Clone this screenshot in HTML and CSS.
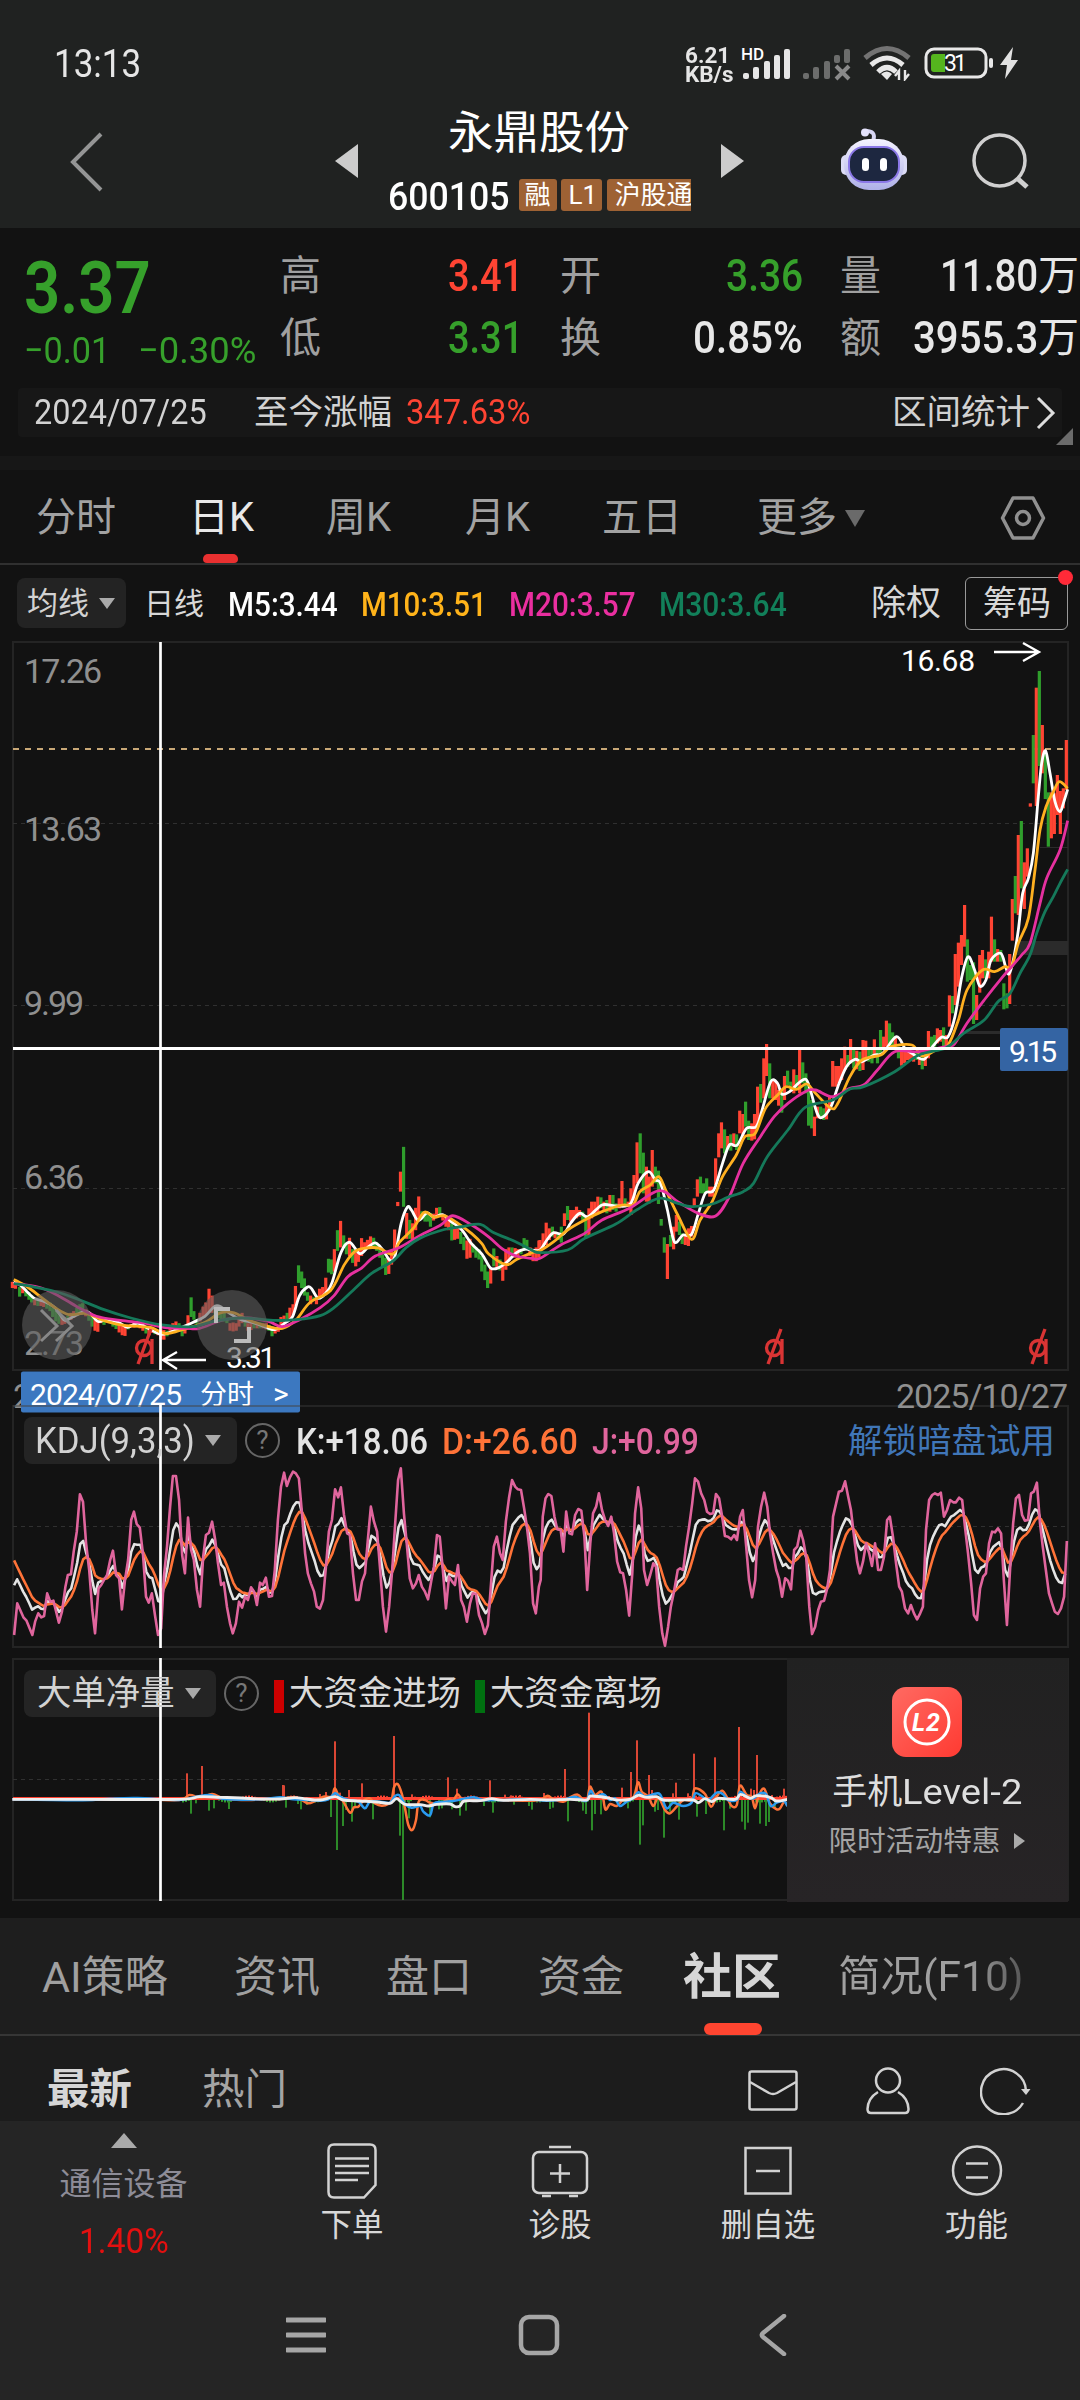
FILE: index.html
```html
<!DOCTYPE html>
<html lang="zh-CN">
<head>
<meta charset="utf-8">
<title>永鼎股份 600105</title>
<link rel="stylesheet" href="styles.css">
</head>
<body>
<header class="top">
  <div class="status">
    <span class="clock fit" data-w="87">13:13</span>
    <div class="speed"><span class="fit" data-w="45">6.21</span><span class="fit" data-w="49">KB/s</span></div>
    <svg class="signals" width="114" height="36" viewBox="0 0 114 36">
      <text x="1" y="15" font-size="17" font-weight="500" textLength="23">HD</text>
      <g fill="#e6e6e6"><rect x="3" y="28" width="6" height="6" rx="2"/><rect x="13" y="22" width="6" height="12" rx="2"/><rect x="24" y="16" width="6" height="18" rx="2"/><rect x="34" y="10" width="6" height="24" rx="2"/><rect x="44" y="4" width="6" height="30" rx="2"/></g>
      <g fill="#6c6d6c"><rect x="63" y="28" width="6" height="6" rx="2"/><rect x="73" y="22" width="6" height="12" rx="2"/><rect x="84" y="16" width="6" height="18" rx="2"/><rect x="94" y="10" width="6" height="8" rx="2"/><rect x="104" y="4" width="6" height="14" rx="2"/></g>
      <path d="M96 21l13 13M109 21l-13 13" stroke="#8a8a8a" stroke-width="4"/>
    </svg>
    <svg class="wifi" width="48" height="36" viewBox="0 0 48 36" fill="none" stroke-width="5">
      <path d="M2 13Q24-6 46 13" stroke="#737373"/><path d="M8 20Q24 6 40 20" stroke="#e8e8e8"/><path d="M15 27Q24 18 33 27" stroke="#e8e8e8"/>
      <path d="M18 29Q24 24 29 29L24 35Z" fill="#e8e8e8"/><path d="M36 35V26l-4 5M42 25v9l4-5" stroke="#e8e8e8" stroke-width="2.4"/>
    </svg>
    <svg class="battery" width="96" height="34" viewBox="0 0 96 34">
      <rect x="2" y="3" width="60" height="28" rx="8" fill="none" stroke="#e8e8e8" stroke-width="3"/>
      <path d="M10 8h11v18h-11q-3 0-3-3v-12q0-3 3-3" fill="#55b51e"/><rect x="65" y="12" width="4" height="10" rx="2" fill="#e8e8e8"/>
      <text x="20" y="25" font-size="23" textLength="23">31</text>
      <path d="M89 1L76 19h7l-2 14 13-19h-7z" fill="#e2e2e2"/>
    </svg>
  </div>
  <div class="titlebar">
    <svg class="back" width="36" height="62" viewBox="0 0 36 62"><path d="M32 3L4 31L32 59" fill="none" stroke="#949595" stroke-width="4"/></svg>
    <svg class="prev" width="24" height="36"><path d="M23 1V35L0 18Z" fill="#ccc"/></svg>
    <div class="name">
      <h1>永鼎股份</h1>
      <div class="code"><span class="fit" data-w="122">600105</span><i class="t1">融</i><i class="t2">L1</i><i class="t3">沪股通</i></div>
    </div>
    <svg class="next" width="24" height="36"><path d="M0 1V35L23 18Z" fill="#ccc"/></svg>
    <svg class="robot" width="68" height="64" viewBox="0 0 68 64">
      <defs><linearGradient id="shell" x1="0" y1="0" x2="0" y2="1"><stop offset="0" stop-color="#f4f2ff"/><stop offset="1" stop-color="#aeb0e8"/></linearGradient></defs>
      <path d="M33 13Q37 2 24 3" fill="none" stroke="#d8d6f5" stroke-width="4"/><circle cx="25" cy="4.500" r="4" fill="#e4e2fb"/>
      <rect x="1" y="27" width="10" height="20" rx="5" fill="#dcdcf6"/><rect x="57" y="27" width="10" height="20" rx="5" fill="#dcdcf6"/>
      <rect x="4" y="11" width="60" height="51" rx="25" fill="url(#shell)"/>
      <rect x="9" y="19" width="50" height="35" rx="15" fill="#1d2740" stroke="#8b78e8" stroke-width="2"/>
      <rect x="22" y="30" width="7" height="13" rx="3.500" fill="#fff"/><rect x="40" y="30" width="7" height="13" rx="3.500" fill="#fff"/>
    </svg>
    <svg class="search" width="60" height="60" viewBox="0 0 60 60" fill="none" stroke="#d0d0d0" stroke-width="3.500"><circle cx="28.500" cy="28.500" r="25.500"/><path d="M46 46L56 55" stroke-width="5"/></svg>
  </div>
</header>

<section class="quote">
  <div class="price"><b class="fit green" data-w="127">3.37</b><p class="green"><span class="fit" data-w="86">−0.01</span><span class="fit" data-w="118">−0.30%</span></p></div>
  <dl>
    <dt>高</dt><dd><span class="fit red" data-w="75">3.41</span></dd><dt>开</dt><dd><span class="fit green" data-w="77">3.36</span></dd><dt>量</dt><dd><span class="fit" data-w="98">11.80</span><em>万</em></dd>
    <dt>低</dt><dd><span class="fit green" data-w="75">3.31</span></dd><dt>换</dt><dd><span class="fit" data-w="110">0.85%</span></dd><dt>额</dt><dd><span class="fit" data-w="125">3955.3</span><em>万</em></dd>
  </dl>
  <div class="since"><span class="fit" data-w="173">2024/07/25</span><span>至今涨幅</span><span class="fit red" data-w="124">347.63%</span><span>区间统计</span>
    <svg width="20" height="34" viewBox="0 0 20 34"><path d="M2 2L17 17L2 32" fill="none" stroke="#ddd" stroke-width="3"/></svg></div>
  <i class="corner"></i>
</section>

<nav class="periods">
  <span>分时</span><span class="on">日K</span><span>周K</span><span>月K</span><span>五日</span><span>更多<i class="down"></i></span>
  <svg width="46" height="44" viewBox="0 0 46 44" fill="none" stroke="#909090" stroke-width="3.500"><path d="M13 2H33L43.500 22L33 42H13L2.500 22Z" stroke-linejoin="round"/><circle cx="23" cy="22" r="6.500"/></svg>
</nav>

<div class="legend">
  <span class="pick">均线<i class="down"></i></span><span class="day">日线</span>
  <span class="fit m5" data-w="110">M5:3.44</span><span class="fit m10" data-w="126">M10:3.51</span><span class="fit m20" data-w="127">M20:3.57</span><span class="fit m30" data-w="128">M30:3.64</span>
  <span class="right">除权</span><span class="chips">筹码</span>
</div>

<main class="charts">
  <svg id="plot" width="1080" height="1278" viewBox="0 641 1080 1278">
    <g fill="none" stroke="#242424" stroke-width="2">
      <rect x="13" y="642" width="1055" height="728"/><rect x="13" y="1406" width="1055" height="241"/><rect x="13" y="1659" width="1055" height="241"/>
    </g>
    <g stroke="#303030" stroke-width="1.200" stroke-dasharray="4 4"><path d="M13 823.500H1068M13 1005.500H1068M13 1188.500H1068M13 1526.500H1068M13 1779.500H787"/></g>
    <path d="M13 749H1068" stroke="#c9a877" stroke-width="2" stroke-dasharray="6 6"/>
    <path d="M1020 941H1068V955H1015ZM965 1031H1001V1034H965ZM1040 847H1068V848H1040Z" fill="#2b2b2b"/>
    <g class="axis"><text x="24" y="683" textLength="78">17.26</text><text x="24" y="841" textLength="78">13.63</text><text x="24" y="1015" textLength="60">9.99</text><text x="24" y="1189" textLength="60">6.36</text><text x="24" y="1355" textLength="60">2.73</text><text x="13" y="1408" textLength="170">2024/06/26</text><text x="896" y="1408" textLength="172">2025/10/27</text></g>
    <g id="candles"></g><g id="averages"></g><g id="kdj"></g><g id="flow"></g>
    <path d="M13 1048.500H1001" stroke="#fff" stroke-width="3"/>
    <rect x="1000" y="1028" width="68" height="43" rx="2" fill="#3464a3"/><text class="mark" x="1009" y="1062" textLength="48">9.15</text>
    <g class="mark"><text x="901" y="671" textLength="74">16.68</text><text x="226" y="1368" textLength="50">3.31</text></g>
    <path d="M994 652H1038M1023 643L1039 652L1023 661M206 1360H164M177 1352L163 1360L177 1369" fill="none" stroke="#fff" stroke-width="2.300"/>
    <g fill="none" stroke="#d93434" stroke-width="3.300"><g id="ex"><circle cx="774" cy="1348" r="7.500"/><path d="M782 1339V1364M781 1329L768 1364"/></g><use href="#ex" x="264"/><use href="#ex" x="-630"/></g>
    <g fill="#5c5c5c" fill-opacity=".6"><circle cx="57" cy="1325" r="35"/><circle cx="232" cy="1325" r="35"/></g>
    <g fill="none" stroke="#bbb" stroke-width="3"><path d="M41 1310L57 1326L41 1341M56 1310L72 1326L56 1341" stroke="#888"/><path d="M216 1323V1309H230M249 1327V1341H234" stroke-width="4"/></g>
    <rect x="21" y="1371.500" width="279" height="41" rx="2" fill="#3c78c0"/>
    <g class="mark"><text x="30" y="1405" textLength="152">2024/07/25</text><text x="200" y="1404" font-size="27">分时</text><text x="273" y="1404" textLength="17">&gt;</text></g>
    <path d="M13 1406H21M21 1406H300" stroke="#444" stroke-width="1"/>
    <path d="M160.500 642V1370M160.500 1405V1648M160.500 1658V1901" stroke="#fff" stroke-width="2.700"/>
  </svg>
  <div class="kdjbar">
    <span class="pick"><span class="fit" data-w="160">KDJ(9,3,3)</span><i class="down"></i></span><i class="help">?</i>
    <span class="fit" data-w="132">K:+18.06</span><span class="fit d" data-w="136">D:+26.60</span><span class="fit j" data-w="107">J:+0.99</span><span class="link">解锁暗盘试用</span>
  </div>
  <div class="flowbar"><span class="pick">大单净量<i class="down"></i></span><i class="help">?</i><i class="in"></i><span>大资金进场</span><i class="out"></i><span>大资金离场</span></div>
  <aside class="promo">
    <svg width="70" height="70" viewBox="0 0 70 70"><defs><linearGradient id="rd" x1="0" y1="0" x2="1" y2="1"><stop offset="0" stop-color="#ff6a62"/><stop offset="1" stop-color="#ff3a32"/></linearGradient></defs><rect width="70" height="70" rx="14" fill="url(#rd)"/><circle cx="35" cy="35" r="22" fill="none" stroke="#fff" stroke-width="3"/><text x="20" y="44" font-size="25" textLength="28" font-weight="700" font-style="italic">L2</text></svg>
    <b><span>手机</span><span class="fit" data-w="120">Level-2</span></b><p>限时活动特惠<i></i></p>
  </aside>
</main>

<nav class="sections"><span>AI策略</span><span>资讯</span><span>盘口</span><span>资金</span><span class="on">社区</span><span class="fade">简况(F10)</span></nav>

<div class="posts"><b>最新</b><span>热门</span>
  <svg width="50" height="42" viewBox="0 0 50 42"><rect x="1.500" y="1.500" width="47" height="38" rx="2"/><path d="M2 12L21 23Q25 25 29 23L48 12"/></svg>
  <svg width="44" height="48" viewBox="0 0 44 48"><circle cx="22" cy="13.500" r="12"/><path d="M12 25Q2 31 1.500 42Q1.500 46 5 46H39Q42.500 46 42.500 42Q42 31 32 25"/></svg>
  <svg width="52" height="48" viewBox="0 0 52 48"><path d="M43 36A22.500 22.500 0 1 1 46 24"/><path d="M41 22H50.500L46 28Z" fill="#d2d2d2" stroke="none"/></svg>
</div>

<footer>
  <div class="actions">
    <div class="sector"><i></i><span>通信设备</span><b class="fit" data-w="90">1.40%</b></div>
    <div><svg width="50" height="56" viewBox="0 0 50 56"><path d="M7 1.500H43Q48.500 1.500 48.500 7V42L37 54.500H7Q1.500 54.500 1.500 49V7Q1.500 1.500 7 1.500ZM8 15.500H42M8 23H42M8 30H42M8 37H31"/></svg>下单</div>
    <div><svg width="60" height="56" viewBox="0 0 60 56"><rect x="3" y="9" width="54" height="41" rx="6"/><path d="M19 4H41M30 21V40M20 30.500H40M12 53H21M39 53H48"/></svg>诊股</div>
    <div><svg width="48" height="56" viewBox="0 0 48 56"><path d="M1.500 5H46.500V50.500H1.500ZM12 28H36"/></svg>删自选</div>
    <div><svg width="52" height="56" viewBox="0 0 52 56"><circle cx="26" cy="27.500" r="24"/><path d="M15 20.500H37M15 34.500H37"/></svg>功能</div>
  </div>
  <div class="system">
    <svg width="40" height="42" viewBox="0 0 40 42"><path d="M1 6H39M1 21H39M1 36H39"/></svg>
    <svg width="42" height="42" viewBox="0 0 42 42"><rect x="3" y="3" width="36" height="36" rx="8"/></svg>
    <svg width="30" height="42" viewBox="0 0 30 42"><path d="M26 2L5 19Q2.500 21 5 23L26 40"/></svg>
  </div>
</footer>
<script src="app.js"></script>
</body>
</html>
```
FILE: styles.css
```css
* { box-sizing: border-box; margin: 0; padding: 0; }
body { width: 1080px; height: 2400px; overflow: hidden; background: #121212; color: #d8d8d8; font-family: Roboto, "Noto Sans CJK SC", sans-serif; font-size: 34px; line-height: 1; }
i, em { font-style: normal; }
svg { display: block; flex: none; }
svg text { fill: #fff; }
.fit { display: inline-block; white-space: nowrap; transform-origin: 0 50%; justify-self: start; flex: none; }
.green { color: #36a02b; }
.red { color: #ff4433; }
.down { display: inline-block; border: solid transparent; border-width: 11px 8.500px 0; border-top-color: #aaa; }

.top { height: 228px; background: #202221; }
.status { height: 100px; padding: 26px 0 0 54px; display: flex; align-items: center; }
.clock { font-size: 39px; color: #e6e6e6; padding-top: 2px; }
.speed { display: grid; margin-left: 544px; width: 55px; font-size: 22px; font-weight: 700; line-height: 19px; color: #e6e6e6; padding-top: 4px; }
.wifi { margin-left: 9px; }
.battery { margin-left: 13px; }
.titlebar { height: 128px; display: flex; align-items: flex-start; }
.back { margin: 31px 0 0 69px; }
.prev { margin: 43px 0 0 230px; }
.name { width: 333px; margin-left: 29px; height: 120px; }
.name h1 { font-size: 45.500px; font-weight: 400; line-height: 54px; padding: 7px 0 0 60px; color: #fff; }
.code { display: flex; align-items: center; height: 32px; margin-top: 18px; width: 303px; overflow: hidden; color: #fff; font-size: 38px; font-weight: 500; }
.code .fit { padding-top: 3px; }
.code i { background: #9e6234; height: 32px; border-radius: 3px; font-size: 26px; line-height: 33px; font-weight: 400; flex: none; }
.t1 { width: 38px; margin-left: 9px; padding-left: 6px; }
.t2 { width: 41px; margin-left: 4px; padding-left: 8px; }
.t3 { width: 100px; margin-left: 5px; padding-left: 8px; }
.next { margin: 43px 0 0 0; }
.robot { margin: 28px 0 0 95px; }
.search { margin: 32px 0 0 63px; }

.quote { height: 228px; position: relative; display: grid; grid-template-columns: 280px 1fr; grid-template-rows: 160px 49px; }
.price { padding: 24px 0 0 24px; }
.price b { font-size: 73px; font-weight: 600; }
.price p { font-size: 37px; display: flex; gap: 28px; margin-top: 7px; }
.quote dl { display: grid; grid-template-columns: 42px 201px 79px 201px 79px 197px; grid-auto-rows: 62px; padding-top: 17px; align-items: center; font-size: 44px; }
.quote dt { color: #a0a0a0; font-size: 41px; }
.quote dd { display: flex; justify-content: flex-end; align-items: center; color: #e8e8e8; font-weight: 500; }
.quote dt:nth-of-type(3n+2), .quote dt:nth-of-type(3n) { padding-left: 37px; }
.quote em { font-size: 41px; font-weight: 400; }
.since { grid-column: 1 / -1; margin: 0 18px; background: #171717; border-radius: 4px; display: grid; align-items: center; padding-left: 16px; grid-template-columns: 220px 152px 486px 144px 1fr; font-size: 34.500px; color: #d2d2d2; }
.corner { position: absolute; left: 1056px; top: 200px; border: solid transparent; border-width: 0 0 17px 17px; border-bottom-color: #6b6b6b; }

.periods { border-top: 14px solid #171717; border-bottom: 2px solid #303030; height: 109px; display: grid; grid-template-columns: 153px 137px 139px 137px 155px 243px 46px; padding-left: 36px; align-items: center; font-size: 40px; color: #a2a2a2; padding-top: 2px; }
.periods .on { color: #e8e8e8; position: relative; }
.periods .on::after { content: ""; position: absolute; left: 14px; top: 56px; width: 35px; height: 9px; border-radius: 5px 5px 4px 4px; background: #e93030; }
.periods .down { border-width: 17px 10px 0; border-top-color: #6a6a6a; margin-left: 8px; vertical-align: 4px; }

.legend { height: 76px; display: flex; align-items: center; padding: 0 12px 0 17px; font-size: 33.500px; }
.pick { background: #232323; border-radius: 8px; display: flex; align-items: center; color: #d2d2d2; }
.legend .pick { width: 109px; height: 50px; padding-left: 10px; font-size: 31px; gap: 10px; }
.day { margin-left: 18px; font-size: 30px; width: 84px; padding-top: 2px; }
.m5 { color: #fff; } .m10 { color: #ffb31a; } .m20 { color: #ea2fa0; } .m30 { color: #12805a; }
.legend .fit { padding-top: 4px; margin-right: 23px; font-weight: 500; }
.right { margin-left: auto; width: 94px; font-size: 35px; }
.chips { width: 103px; height: 53px; border: 1.500px solid #999; border-radius: 6px; font-size: 34px; line-height: 50px; padding-left: 17px; position: relative; white-space: nowrap; }
.chips::after { content: ""; position: absolute; right: -6px; top: -8px; width: 15px; height: 15px; border-radius: 50%; background: #ff2a38; }

.charts { position: relative; height: 1277px; }
.axis text { fill: #8f8f8f; font-size: 34px; }
.mark { font-size: 30px; }
.kdjbar, .flowbar { position: absolute; left: 24px; display: flex; align-items: center; height: 47px; width: 1044px; }
.kdjbar { top: 776px; font-size: 36px; color: #e4e4e4; gap: 14px; }
.kdjbar > .fit { font-weight: 500; padding-top: 2px; }
.kdjbar .pick { width: 213px; height: 47px; padding-left: 11px; gap: 10px; background: #ffffff14; }
.kdjbar .d { color: #ff7338; }
.kdjbar .j { color: #e0659d; }
.link { margin: 0 13px 0 auto; color: #4076b8; font-size: 34.500px; padding-top: 2px; }
.help { width: 35px; height: 35px; border: 2.500px solid #666; border-radius: 50%; color: #777; font-size: 26px; line-height: 31px; text-align: center; }
.kdjbar .help { margin: 0 2px 0 -6px; }
.flowbar { top: 1029px; font-size: 34.400px; color: #dadada; width: 740px; white-space: nowrap; }
.flowbar .pick { width: 192px; height: 47px; padding-left: 13px; gap: 10px; background: #ffffff14; font-size: 34.400px; }
.flowbar .help { margin: 0 15px 0 8px; }
.in, .out { width: 10px; height: 33px; background: #c00; margin-right: 5px; margin-top: 5px; }
.out { background: #007010; margin-left: 14px; }
.promo { position: absolute; left: 787px; top: 1017px; width: 281px; height: 244px; background: linear-gradient(#212121, #272426); display: flex; flex-direction: column; align-items: center; padding-top: 29px; }
.promo svg { margin-left: -1px; }
.promo b { font-weight: 400; font-size: 35px; margin-top: 18px; color: #dedede; display: flex; align-items: center; }
.promo p { font-size: 28.700px; color: #a4a4a4; margin: 17px 2px 0 0; display: flex; align-items: center; }
.promo p i { border: solid transparent; border-width: 8px 0 8px 11px; border-left-color: #aaa; margin-left: 13px; }

.sections { height: 118px; background: #1e1e1e; border-bottom: 2px solid #363636; display: grid; grid-template-columns: 192px 152px 152px 145px 156px 1fr; padding: 3px 0 0 42px; align-items: center; font-size: 43px; color: #a0a0a0; white-space: nowrap; }
.sections .on { font-size: 49px; font-weight: 700; color: #d6d6d6; position: relative; }
.sections .on::after { content: ""; position: absolute; left: 21px; top: 70px; width: 58px; height: 12px; border-radius: 6px; background: #ff4530; }
.fade { background: linear-gradient(90deg, #a0a0a0 70%, #555); background-clip: text; color: transparent; justify-self: start; font-size: 42.500px; padding: 3px 0; margin-left: -1px; }
.posts { height: 85px; background: #1c1c1c; display: grid; grid-template-columns: 155px 546px 118px 114px 1fr; padding: 24px 0 0 47px; align-items: center; font-size: 42.500px; color: #a4a4a4; }
.posts b { color: #d6d6d6; }
.posts svg, footer svg { fill: none; stroke: #d2d2d2; stroke-width: 2.500; }

footer { height: 279px; background: #252525; }
.actions { height: 160px; display: grid; grid-template-columns: 247px 210px 206px 210px 207px; font-size: 31.500px; color: #d8d8d8; }
.actions > div { display: flex; flex-direction: column; align-items: center; padding-top: 22px; gap: 11px; }
.actions .sector { padding: 12px 0 0; gap: 0; font-size: 32px; color: #8d8c97; }
.sector i { border: solid transparent; border-width: 0 13px 15px; border-bottom-color: #aaa; }
.sector span { margin-top: 20px; }
.sector b { font-size: 35px; font-weight: 400; color: #e31010; margin-top: 24px; }
.system { display: flex; padding: 33px 0 0 286px; }
.system svg { stroke: #a6a6a6; stroke-width: 4.500; stroke-linecap: round; }
.system svg:nth-child(1) { stroke-width: 5; }
.system svg:nth-child(2) { margin-left: 192px; }
.system svg:nth-child(3) { margin-left: 198px; }
```
FILE: app.js
```js
// Condense each label to its column width.
document.querySelectorAll('.fit').forEach(el => {
  const natural = el.offsetWidth, w = +el.dataset.w;
  el.style.transform = `scaleX(${w / natural})`;
  el.style.marginRight = `${w - natural + (parseFloat(getComputedStyle(el).marginRight) || 0)}px`;
});

const NS = 'http://www.w3.org/2000/svg';
const add = (id, tag, attrs) => {
  const n = document.createElementNS(NS, tag);
  for (const k in attrs) n.setAttribute(k, attrs[k]);
  document.getElementById(id).appendChild(n);
};
const RED = '#ff4433', GREEN = '#2f9e2c';
// Data blocks carry their own origin and scale.
const A = [0, 1120, 2.904, 2.904], B = [540, 900, 2.904, 3], C = [800, 630, 3, 3];
const place = ([ox, oy, kx, ky], x, y) => [ox + x / kx, oy + y / ky];

const bars = [
[A, `36R470,488 45R472,490 57G485,513 66R487,503 75G490,512 84G500,522 92G508,530 101R522,538 110G520,540 119R520,540 127R528,543 136G530,548 145G530,555 153G545,572 162G550,585 171G560,592 180R570,595 188R572,592 197G568,588 206R560,580 214R555,575 223G545,565 232G535,560 240G532,558 249R550,570 258G560,583 267G570,600 276R580,612 284R585,615 293R580,590 302G580,595 311R575,588 320R575,590 328G578,600 337G585,607 346R590,617 355R598,625 363R600,627 372G598,608 380R592,602 389R590,603 398G588,600 407R590,605 415R592,612 424G598,620 433R600,625 441R605,618 450G608,622 459R610,625 468R608,637 476R610,638 485G612,628 494R598,612 502R590,605 511R585,605 520G590,612 529G600,628 537R595,620 546R567,595 555G515,572 563G555,580 572G578,592 581R560,585 590R542,575 598R530,565 607R490,560 616R510,560 625G540,570 633G545,575 642G555,580 651G560,585 659G575,590 668R590,612 677R588,614 686R590,612 694R570,600 703R560,590 712G575,600 720R590,612 729R590,610 738G590,605 747R590,605 755G588,605 764R590,605 773R590,608 781G595,612 790G600,628 799R605,620 808R600,615 816R572,600 825R568,590 834G560,585 842R545,580 851R535,565 858R482,540 867G422,473 876G440,488 884G460,510 893G500,525 902R510,535 911G515,525 919R520,535 928R490,520 937R485,515 946R458,500 954G403,443 963G405,448 971R375,440 980G320,380 989R293,370 998G335,370 1006G355,390 1015R342,395 1024G375,415 1033R385,425 1041R375,412 1050R343,395 1059R355,380 1067R348,375 1076R338,370 1085G342,370 1094G355,380 1103G375,400 1111G390,430 1120G400,450 1129R400,447 1137R380,420 1146R318,375 1155R238,250 1163R150,208 1172G78,252 1181R270,345 1190G290,345 1198R300,355 1207R255,320 1216R222,285 1225G265,285 1234G270,295 1242G275,295 1250G270,310 1259R272,292 1268R255,285 1277G253,275 1286R275,292 1295R280,310 1303R285,320 1312G300,350 1320R315,348 1329R305,345 1338G325,360 1347G340,378 1356R350,403 1365R345,400 1373G360,385 1382G370,400 1391G375,405 1399G395,440 1408G420,465 1416G440,488 1425R430,475 1434G373,425 1443R395,430 1452G405,437 1460R420,467 1469R375,435 1478R370,410 1487G370,400 1496R372,400 1504R375,395 1513G375,390 1522G343,380 1530G348,375 1539R370,395 1548R385,410 1557R370,410 1565R350,400`],
[B, `0R1020,1055 9R1000,1040 18R968,1035 27R985,1020 36G980,1010 44R1000,1015 53G1000,1020 62G980,1028 71R940,978 80G918,960 89R930,965 97R930,960 106R920,955 115R930,950 124G935,960 133G945,1015 142R925,1008 150R905,955 159R905,945 168R890,940 177G892,925 186R905,930 194G900,940 203R885,935 212G885,930 221G910,935 230R895,925 238R843,915 247G895,915 256R905,915 264R865,945 273R825,900 282R727,850 291G700,820 300G758,880 309R800,905 317R830,910 326R750,860 335G800,850 344G812,912 352G957,977 361G1012,1058 370R1032,1137 379G1005,1040 388R980,1048 396R945,995 405G965,1005 413G1000,1032 422R1005,1035 431R985,1038 440R978,1010 448R895,920 457R838,890 466G830,880 475G850,880 484G835,875 493R860,890 501R860,890 510R775,855 519R700,772 527R667,745 536G688,760 545R708,745 554G703,752 563R700,740 571G703,750 580R632,700 589R642,710 597G605,680 606G662,720 615R670,722 623R642,718 632R560,680 641G552,608 650R475,595 658R432,528 667G490,595 676R540,595 685R545,600 693R570,617 702G570,638 710R528,600 719G512,555 728G545,570 737R508,580 745G525,570 754R450,580 763G487,550 772G520,580 780G560,677 789G600,685 797R650,708 806R620,655 815G620,650 824G625,660 832R615,658 841R590,620 850R483,560 859R498,560 867R498,550 876R475,540 885R440,510 894G465,500 902R417,490 911G445,505 920R452,508 929G455,513 938R420,510 946R422,480 955G450,485 964G450,490 971R418,470 980G450,490 989G390,465 998R410,450 1006R362,440 1015G370,440 1024G397,440 1032R410,440 1041G440,475 1050R450,497 1059R455,490 1067R450,480 1076R455,480 1085R460,485 1094G455,480 1102R470,495 1110G470,508 1119R455,498 1128R393,475 1137G410,450 1146G405,440 1154R385,430 1163R390,425 1172G382,440 1180R405,445 1189R286,380 1198G288,340 1206R162,315 1215R128,260 1224R105,195 1233R15,140 1241G118,245 1250G195,240 1259G187,372 1268R285,360 1277R165,278 1285R150,235 1294G178,235 1303R155,235 1311R50,185 1320G118,185 1329R147,185 1338G150,185 1347G250,328 1356G280,325 1364R162,312`],
[C, `637R807,932 646G738,850 655R615,855 664G573,775 673R697,837 682R655,740 691R520,530 700G315,460 709R173,528 718G123,408 727R285,430 736G370,507 745G487,650 754R487,625 763R490,612 772R435,555 781R483,612 790R475,535 799R330,480`]];
for (const [blk, text] of bars) for (const item of text.split(' ')) {
  const [, x, c, t, b] = item.match(/(\d+)([RG])(\d+),(\d+)/);
  const [px, y1] = place(blk, +x, +t), y2 = place(blk, 0, +b)[1];
  add('candles', 'rect', { x: px - 1.6, y: y1, width: 3.2, height: y2 - y1, fill: c === 'R' ? RED : GREEN });
}

const parse = (blk, s) => s.split(' ').map(p => place(blk, ...p.split(',').map(Number)));
const curve = pts => {
  let d = 'M' + pts[0];
  for (let i = 0; i < pts.length - 1; i++) {
    const p = pts[i - 1] || pts[i], a = pts[i], b = pts[i + 1], n = pts[i + 2] || b;
    d += `C${a[0] + (b[0] - p[0]) / 6} ${a[1] + (b[1] - p[1]) / 6} ${b[0] - (n[0] - a[0]) / 6} ${b[1] - (n[1] - a[1]) / 6} ${b[0]} ${b[1]}`;
  }
  return d;
};
const line = (id, d, color, w = 2.3) => add(id, 'path', { d, fill: 'none', stroke: color, 'stroke-width': w, 'stroke-linejoin': 'round' });

const averages = [
['#ffffff', '40,470 60,480 80,500 100,518 130,528 160,545 185,580 200,578 240,558 260,560 285,585 310,580 345,588 370,602 400,590 430,605 465,622 490,618 520,605 560,588 595,570 625,540 645,545 665,560 700,580 740,590 780,605 800,608 830,588 850,570 870,510 893,485 905,490 925,518 950,498 965,470 990,385 1015,355 1045,388 1070,368 1090,357 1110,375 1133,408 1147,395 1165,300 1183,253 1195,262 1215,292 1240,270 1260,282 1285,275 1310,295 1340,318 1370,360 1400,390 1425,430 1450,428 1475,410 1500,385 1525,375 1545,378',
'0,1050 20,1020 40,998 68,1002 90,968 115,940 140,950 180,915 220,918 262,912 285,850 315,815 335,840 350,850 370,930 390,1025 415,1005 440,1003 460,940 480,880 505,870 530,790 550,735 573,735 600,685 628,680 645,630 670,545 690,550 702,582 725,575 750,550 772,538 785,570 805,640 820,652 845,620 865,560 890,500 915,478 935,485 970,465 995,460 1035,410 1060,445 1080,460 1115,478 1140,440 1165,412 1185,410 1205,350 1225,230 1243,170 1262,210 1277,258 1295,240 1310,180 1338,160 1352,200',
'627,1032 640,990 655,900 668,790 685,745 700,670 715,500 725,400 737,363 750,430 765,515 780,545 790,520 803,478'],
['#ffb020', '40,463 80,485 120,515 160,545 200,565 250,562 300,582 350,595 410,600 440,603 480,620 520,612 560,600 600,585 640,560 680,560 720,580 780,600 820,605 860,580 900,530 960,495 1000,420 1030,382 1060,372 1100,372 1140,390 1160,355 1200,315 1232,268 1260,282 1290,278 1330,300 1370,330 1400,360 1420,390 1470,420 1500,405 1545,385',
'0,1052 40,1025 80,990 130,960 180,935 240,915 270,915 290,875 320,855 345,830 365,870 400,945 440,1018 465,960 500,905 530,830 570,765 595,710 625,700 655,625 690,585 715,560 745,568 775,552 800,580 845,625 865,610 900,530 935,480 990,465 1020,440 1080,435 1110,468 1150,450 1185,435 1215,360 1240,270 1285,210 1320,215 1350,200',
'635,1010 655,940 685,865 705,720 720,600 738,530 760,485 778,455 803,475'],
['#e6309f', '40,475 110,485 160,505 220,540 280,570 350,582 420,590 480,603 540,605 580,605 650,580 720,575 780,585 820,600 870,580 930,545 970,510 1010,455 1050,430 1090,395 1160,370 1220,335 1280,305 1315,278 1370,305 1420,340 1460,375 1500,395 1545,402',
'0,1075 60,1035 130,1000 180,960 260,925 345,872 400,905 460,940 510,948 550,890 590,790 640,710 680,650 720,610 770,575 800,570 850,590 900,565 940,555 980,510 1030,455 1100,455 1185,438 1205,430 1240,370 1290,300 1340,235',
'635,1010 665,975 690,940 720,820 740,745 780,660 803,572'],
['#15795a', '40,475 100,485 160,498 220,518 300,550 380,575 470,595 560,600 620,585 700,575 800,582 860,580 930,568 970,545 1030,490 1080,445 1140,410 1180,370 1220,343 1290,318 1340,310 1395,303 1430,325 1500,355 1545,378',
'0,1058 80,1050 130,1015 220,972 280,930 345,895 400,910 440,920 500,912 545,892 590,875 620,850 660,770 720,690 770,622 850,600 900,567 940,560 1030,515 1100,465 1180,443 1230,400 1290,360 1330,305',
'630,1090 660,1030 690,975 710,910 735,845 760,800 780,760 803,718']];
for (const [c, a, b, d] of averages) line('averages', curve([...parse(A, a), ...parse(B, b), ...parse(C, d)]), c, 2.8);

// J values, from which K and D follow: D = (6 D' + J) / 7, K = (J + 2 D) / 3.
const j1 = '41,885 50,790 68,832 77,842 94,885 102,845 111,820 120,832 128,828 137,760 146,785 155,782 171,848 180,815 190,740 197,705 206,703 214,635 223,575 232,463 241,485 250,610 259,690 268,810 276,880 286,745 294,735 303,718 311,705 320,660 328,632 337,705 346,715 354,808 363,720 372,660 381,540 389,515 397,552 406,563 415,640 424,770 432,788 441,760 450,825 459,885 468,865 476,710 485,620 494,500 502,408 511,408 520,480 529,645 537,700 546,533 555,630 563,660 572,750 581,800 590,650 598,585 607,578 616,545 625,600 633,670 642,735 650,728 659,800 668,850 676,880 685,850 694,785 703,803 712,770 720,780 729,742 738,755 746,795 755,728 763,735 772,713 781,770 790,768 798,690 807,540 816,440 825,398 833,438 842,412 851,395 859,400 868,415 877,520 886,640 894,700 903,730 912,755 920,800 929,806 938,780 947,675 955,575 964,540 973,448 982,472 990,442 999,525 1008,580 1016,585 1025,700 1034,780 1042,780 1051,725 1060,700 1069,590 1077,500 1086,545 1095,575 1104,690 1112,800 1121,875 1130,800 1139,690 1147,560 1156,420 1164,385 1173,520 1182,620 1190,715 1199,745 1208,730 1216,705 1225,740 1234,755 1243,778 1252,725 1260,680 1269,585 1277,590 1286,690 1295,805 1304,710 1313,725 1321,735 1330,675 1339,780 1347,800 1356,845 1365,790 1373,760 1382,762 1391,825 1400,850 1408,882 1417,855 1426,730 1434,620 1443,590 1452,640 1460,660 1469,545 1478,475 1487,420 1496,440 1504,448 1513,450 1522,505 1530,560 1539,640 1548,790 1556,820 1565,740';
const j2 = '2,720 8,530 16,475 24,462 33,468 42,530 50,568 60,570 68,635 76,515 85,580 93,583 102,525 111,507 120,512 129,590 137,750 146,610 154,520 163,500 171,460 180,510 189,540 198,558 207,530 215,580 224,665 233,697 241,700 250,750 259,827 268,700 276,520 285,442 294,505 302,690 311,735 320,705 329,670 337,680 346,800 355,880 363,917 372,860 380,800 390,750 400,690 407,685 416,690 424,620 433,560 442,490 450,415 459,425 468,460 477,480 485,515 494,522 503,520 511,462 520,475 529,530 537,588 546,590 555,598 564,585 572,600 581,530 589,510 598,610 607,720 616,772 625,720 633,560 642,500 651,458 660,500 668,580 677,640 686,690 694,715 703,770 712,715 720,722 729,748 738,630 747,620 756,572 764,600 773,650 782,800 790,882 799,860 808,810 816,785 825,782 834,745 842,690 851,530 860,490 868,455 877,452 886,424 895,470 903,510 912,590 921,665 929,700 938,665 947,610 956,640 964,678 973,610 982,690 990,690 999,650 1008,540 1016,530 1025,590 1034,670 1043,740 1051,755 1060,805 1069,820 1077,795 1086,820 1095,838 1104,820 1112,800 1121,570 1130,480 1139,465 1147,460 1156,465 1164,458 1173,530 1182,510 1191,480 1200,487 1208,487 1217,473 1226,480 1234,560 1243,640 1252,730 1260,825 1269,840 1278,745 1287,710 1295,700 1304,610 1313,575 1321,577 1330,565 1339,580 1347,720 1356,855 1365,690 1374,550 1382,475 1391,465 1400,525 1408,542 1417,540 1426,460 1434,455 1443,428 1452,550 1460,620 1469,690 1478,760 1487,790 1495,815 1504,822 1513,805 1522,770 1530,603';
const J = [...parse([0, 1340, 2.904, 3], j1), ...parse([540, 1340, 2.904, 3], j2)];
const at = x => { let i = 0; while (i < J.length - 2 && J[i + 1][0] < x) i++; const [a, b] = [J[i], J[i + 1]]; return a[1] + (b[1] - a[1]) * (x - a[0]) / (b[0] - a[0]); };
const K = [], D = [];
let dv = 1548;
for (let x = J[0][0]; x <= 1067; x += 3.003) { const j = at(x); dv = (6 * dv + j) / 7; D.push([x, dv]); K.push([x, (j + 2 * dv) / 3]); }
line('kdj', 'M' + K.join('L'), '#e4e4e4', 2.6);
line('kdj', 'M' + D.join('L'), '#ff7338', 2.6);
line('kdj', 'M' + J.join('L'), '#e0659d', 2.6);

// Net large-order flow around the zero line.
const E = [0, 1640, 1.452, 3], F = [280, 1700, 3, 3];
const early = '272,400 294,378 412,436 277,521 285,490 303,512 311,505 333,507';
const spikes = '10,255 119,282 137,276 164,124 181,278 208,270 245,250 343,108 397,283 406,290 505,232 532,266 631,241 676,284 694,286 721,285 793,279 856,207 928,38 1027,263 1054,216 1072,121 1108,225 1117,270 1180,280 1189,248 1225,280 1243,161 1306,172 1378,81 1414,266 1423,270 1432,165 1477,285 1513,266 '
  + '19,323 55,312 64,328 82,315 154,351 172,450 190,378 199,330 217,365 226,325 280,358 361,407 370,600 388,355 451,352 478,328 487,325 515,328 541,347 559,332 613,318 640,338 703,314 748,318 757,329 811,327 820,323 865,364 910,332 919,342 937,391 946,342 964,343 1045,325 1081,434 1090,376 1126,335 1135,330 1153,413 1171,335 1198,359 1252,350 1279,342 1333,391 1351,326 1387,365 1396,389 1405,368 1441,371 1459,378 1468,366 1486,325';
for (let i = 0; i < 258; i++) {
  const x = 14 + i * 3, amp = x < 180 ? 1.5 : 3.5, v = Math.sin(i * 12.9898) * amp;
  add('flow', 'rect', { x, y: Math.min(1799, 1799 - v), width: 2, height: Math.abs(v), fill: v > 0 ? RED : GREEN });
}
for (const [x, y] of [...parse(E, early), ...parse(F, spikes)]) add('flow', 'rect', { x: Math.round(x) - 1, y: Math.min(y, 1799), width: 2, height: Math.abs(y - 1799), fill: y < 1799 ? '#db4634' : '#2c8a28' });
line('flow', 'M13 1798.500H787', RED, 3);
const left = s => parse(E, s), right = s => parse(F, s);
line('flow', curve([...left('18,478 120,479 200,477 260,480 275,465 292,473 308,462 325,475 350,480 395,477'), ...right('0,297 40,292 65,300 85,310 105,303 130,290 155,290 164,265 175,285 190,305 210,338 222,322 235,320 250,302 268,295 285,310 305,317 325,312 335,300 342,262 353,252 365,280 375,325 385,375 397,390 408,360 416,305 435,300 450,308 480,310 505,298 520,300 533,283 550,300 590,300 630,298 680,300 730,302 780,300 803,287 820,298 850,305 870,292 893,284 910,300 922,298 930,260 945,285 965,276 976,328 990,312 1010,318 1030,300 1060,292 1074,247 1085,275 1105,290 1120,318 1135,292 1155,330 1170,340 1190,320 1210,300 1235,300 1245,265 1275,282 1293,320 1310,290 1327,272 1345,300 1355,318 1370,316 1380,257 1400,285 1415,290 1425,325 1435,290 1452,266 1470,310 1490,328 1500,325 1513,305 1522,318')]), '#ff7338', 2.5);
line('flow', curve([...left('18,478 120,481 160,476 200,474 260,480 285,470 305,465 325,477 380,478'), ...right('0,292 40,298 80,300 120,302 145,298 165,280 180,290 205,300 235,305 255,325 270,305 300,305 330,308 345,288 358,286 375,312 395,323 420,318 430,335 450,346 462,310 490,306 520,303 550,297 580,292 610,300 660,300 740,298 800,302 855,298 885,290 910,302 922,300 932,272 945,290 970,283 990,300 1005,295 1020,318 1040,305 1060,295 1075,277 1095,290 1120,283 1140,283 1160,325 1180,308 1210,318 1235,308 1246,280 1265,288 1285,300 1310,278 1328,282 1345,300 1370,300 1381,275 1400,290 1420,295 1440,280 1458,282 1472,318 1490,308 1512,303 1522,318')]), '#2a9bf0', 2.5);
line('flow', curve([...left('18,478 120,478 260,478 290,470 320,472 350,474 380,477'), ...right('0,297 45,293 80,297 120,300 165,290 190,300 240,303 290,306 330,310 350,296 375,313 420,314 445,318 470,313 510,312 525,320 540,318 553,303 600,302 635,296 670,301 750,298 800,300 870,298 920,300 932,288 980,293 1010,300 1050,298 1075,286 1100,292 1130,290 1150,300 1200,300 1240,300 1255,308 1275,296 1295,305 1315,295 1365,298 1382,283 1410,295 1430,287 1470,292 1490,303 1522,298')]), '#eee', 2.9);
```
